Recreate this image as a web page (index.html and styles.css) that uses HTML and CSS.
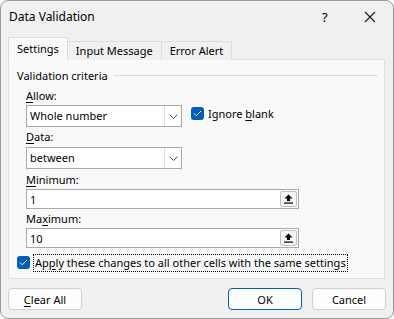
FILE: index.html
```html
<!DOCTYPE html>
<html lang="en">
<head>
    <meta charset="UTF-8">
    <title>Data Validation</title>
    <link rel="stylesheet" href="styles.css">
</head>
<body>
    <div class="window">
        <!-- Title bar -->
        <div class="titlebar">
            <span class="title">Data Validation</span>
            <span class="help">?</span>
            <svg class="close" width="12" height="12" viewBox="0 0 12 12">
                <path d="M1 1 L11 11 M11 1 L1 11" stroke="#1a1a1a" stroke-width="1.1" fill="none"/>
            </svg>
        </div>

        <!-- Tabs -->
        <div class="tabs">
            <div class="tab active">Settings</div>
            <div class="tab">Input Message</div>
            <div class="tab">Error Alert</div>
        </div>

        <div class="panel">
            <div class="group-title"><span>Validation criteria</span><div class="group-line"></div></div>

            <div class="field">
                <label class="lbl"><u>A</u>llow:</label>
                <div class="allow-row">
                    <div class="select">
                        <span class="select-text">Whole number</span>
                        <span class="select-btn">
                            <svg width="9" height="5" viewBox="0 0 9 5"><path d="M0.5 0.5 L4.5 4.5 L8.5 0.5" stroke="#555" fill="none"/></svg>
                        </span>
                    </div>
                    <div class="check ignore">
                        <span class="box"><svg width="9" height="7" viewBox="0 0 9 7"><path d="M1 3.5 L3.3 5.8 L8 1" stroke="#fff" stroke-width="1" fill="none"/></svg></span>
                        <span>Ignore <u>b</u>lank</span>
                    </div>
                </div>
            </div>

            <div class="field">
                <label class="lbl lbl-data"><u>D</u>ata:</label>
                <div class="select select-data">
                    <span class="select-text">between</span>
                    <span class="select-btn">
                        <svg width="9" height="5" viewBox="0 0 9 5"><path d="M0.5 0.5 L4.5 4.5 L8.5 0.5" stroke="#555" fill="none"/></svg>
                    </span>
                </div>
            </div>

            <div class="field">
                <label class="lbl lbl-min"><u>M</u>inimum:</label>
                <div class="input">
                    <span class="input-text">1</span>
                    <span class="ref-btn">
                        <svg width="9" height="10" viewBox="0 0 9 10"><path d="M4.5 0.5 L8.5 4.5 L6 4.5 L6 7 L3 7 L3 4.5 L0.5 4.5 Z" fill="#000"/><rect x="0" y="8.5" width="9" height="1.2" fill="#000"/></svg>
                    </span>
                </div>
            </div>

            <div class="field">
                <label class="lbl lbl-max">Ma<u>x</u>imum:</label>
                <div class="input">
                    <span class="input-text">10</span>
                    <span class="ref-btn">
                        <svg width="9" height="10" viewBox="0 0 9 10"><path d="M4.5 0.5 L8.5 4.5 L6 4.5 L6 7 L3 7 L3 4.5 L0.5 4.5 Z" fill="#000"/><rect x="0" y="8.5" width="9" height="1.2" fill="#000"/></svg>
                    </span>
                </div>
            </div>

            <div class="check apply">
                <span class="box"><svg width="9" height="7" viewBox="0 0 9 7"><path d="M1 3.5 L3.3 5.8 L8 1" stroke="#fff" stroke-width="1" fill="none"/></svg></span>
                <span class="focus">Ap<u>p</u>ly these changes to all other cells with the same settings</span>
            </div>
        </div>

        <!-- Buttons -->
        <div class="footer">
            <button class="btn"><u>C</u>lear All</button>
            <div class="spacer"></div>
            <button class="btn btn-ok">OK</button>
            <button class="btn">Cancel</button>
        </div>
    </div>
</body>
</html>
```

FILE: styles.css
```css
body { margin: 0; font-family: "Noto Sans", sans-serif; font-size: 11px; color: #000; background: #fff; }
u { text-decoration: underline; text-underline-offset: 2px; }
.window { width: 392px; height: 317px; border: 1px solid #9a9a9a; border-radius: 8px; background: #f0f0f0; overflow: hidden; }

.titlebar { height: 31px; display: flex; align-items: center; padding-left: 8px; }
.title { font-size: 12px; flex: 1; }
.help { font-size: 13px; width: 12px; margin-right: 30px; }
.close { margin-right: 17px; }

.tabs { display: flex; align-items: flex-end; margin: 6px 0 0 7px; height: 22px; position: relative; z-index: 1; }
.tab { height: 18px; line-height: 18px; padding: 0 8px; border: 1px solid #dcdcdc; border-bottom: none; border-left: none; background: #f0f0f0; }
.tab.active { height: 22px; line-height: 22px; background: #f9f9f9; border-left: 1px solid #dcdcdc; }

.panel { margin: -1px 8px 0 7px; height: 218px; border: 1px solid #e0e0e0; background: #f9f9f9; padding: 0 0 0 8px; }

.group-title { display: flex; align-items: center; height: 16px; margin-top: 7px; }
.group-line { flex: 1; height: 1px; background: #dcdcdc; margin: 0 6px 0 6px; }

.field { margin-left: 9px; }
.lbl { display: block; height: 16px; line-height: 16px; margin-top: 5px; }
.lbl-data { margin-top: 2px; }
.lbl-min { margin-top: 3px; }
.lbl-max { margin-top: 2px; }

.allow-row { display: flex; align-items: flex-start; margin-top: 1px; }
.select { width: 154px; height: 20px; border: 1px solid #a8a8a8; background: #fff; display: flex; align-items: stretch; }
.select-data { margin-top: 2px; }
.select-text { flex: 1; line-height: 20px; padding-left: 3px; }
.select-btn { width: 16px; border-left: 1px solid #dadada; display: flex; align-items: center; justify-content: center; }

.check { display: flex; align-items: center; }
.box { width: 13px; height: 13px; border-radius: 3px; background: #005fb8; display: flex; align-items: center; justify-content: center; margin-right: 4px; }
.ignore { margin: 1px 0 0 9px; }
.apply { margin-top: 6px; height: 17px; }
.focus { outline: 1px dotted #000; padding: 0 1px; line-height: 16px; }

.input { width: 271px; height: 18px; border: 1px solid #a8a8a8; background: #fff; display: flex; align-items: center; margin-top: 1px; }
.input-text { flex: 1; padding-left: 3px; }
.ref-btn { width: 17px; height: 16px; border: 1px solid #c0c0c0; border-radius: 2px; margin-right: 1px; background: #f7f7f7; display: flex; align-items: center; justify-content: center; box-sizing: border-box; }

.footer { display: flex; margin: 9px 7px 0 7px; }
.spacer { flex: 1; }
.btn { width: 74px; height: 22px; font-family: "Noto Sans", sans-serif; font-size: 11px; background: #fdfdfd; border: 1px solid #d0d0d0; border-radius: 4px; padding: 0; color: #000; }
.btn-ok { border-color: #005fb8; margin-right: 10px; }
```
